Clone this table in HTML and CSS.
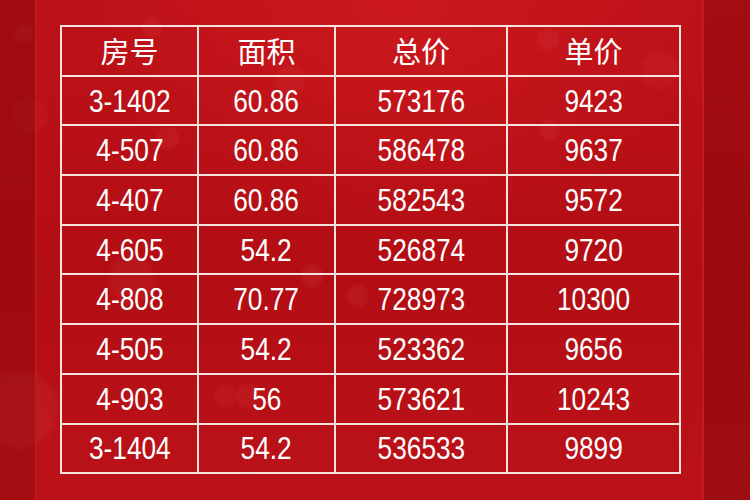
FILE: index.html
```html
<!DOCTYPE html>
<html lang="zh">
<head>
<meta charset="utf-8">
<title>房源价格表</title>
<link rel="stylesheet" href="styles.css">
</head>
<body>
<div class="page">
  <div class="side side-left"></div>
  <div class="main">
    <table class="price">
      <colgroup>
        <col class="c1"><col class="c2"><col class="c3"><col class="c4">
      </colgroup>
      <thead>
        <tr><th>房号</th><th>面积</th><th>总价</th><th>单价</th></tr>
      </thead>
      <tbody>
        <tr><td><span>3-1402</span></td><td><span>60.86</span></td><td><span>573176</span></td><td><span>9423</span></td></tr>
        <tr><td><span>4-507</span></td><td><span>60.86</span></td><td><span>586478</span></td><td><span>9637</span></td></tr>
        <tr><td><span>4-407</span></td><td><span>60.86</span></td><td><span>582543</span></td><td><span>9572</span></td></tr>
        <tr><td><span>4-605</span></td><td><span>54.2</span></td><td><span>526874</span></td><td><span>9720</span></td></tr>
        <tr><td><span>4-808</span></td><td><span>70.77</span></td><td><span>728973</span></td><td><span>10300</span></td></tr>
        <tr><td><span>4-505</span></td><td><span>54.2</span></td><td><span>523362</span></td><td><span>9656</span></td></tr>
        <tr><td><span>4-903</span></td><td><span>56</span></td><td><span>573621</span></td><td><span>10243</span></td></tr>
        <tr><td><span>3-1404</span></td><td><span>54.2</span></td><td><span>536533</span></td><td><span>9899</span></td></tr>
      </tbody>
    </table>
  </div>
  <div class="side side-right"></div>
</div>
</body>
</html>
```

FILE: styles.css
```css
html, body {
  margin: 0;
  padding: 0;
}
body {
  width: 750px;
  height: 500px;
  overflow: hidden;
  background: #b40e14;
}
.page {
  display: flex;
  width: 750px;
  height: 500px;
  background:
    radial-gradient(circle at 24px 33px, rgba(255,120,120,0.10) 0 8px, transparent 11px),
    radial-gradient(circle at 30px 115px, rgba(255,110,110,0.06) 0 16px, transparent 20px),
    radial-gradient(circle at 152px 27px, rgba(255,130,130,0.08) 0 8px, transparent 12px),
    radial-gradient(circle at 168px 138px, rgba(255,130,130,0.08) 0 9px, transparent 13px),
    radial-gradient(circle at 132px 280px, rgba(255,130,130,0.07) 0 20px, transparent 26px),
    radial-gradient(circle at 20px 410px, rgba(255,130,130,0.08) 0 34px, transparent 42px),
    radial-gradient(circle at 290px 80px, rgba(255,130,130,0.06) 0 12px, transparent 17px),
    radial-gradient(circle at 312px 276px, rgba(255,130,130,0.09) 0 9px, transparent 13px),
    radial-gradient(circle at 358px 296px, rgba(255,130,130,0.08) 0 9px, transparent 13px),
    radial-gradient(circle at 248px 396px, rgba(255,130,130,0.08) 0 10px, transparent 14px),
    radial-gradient(circle at 225px 396px, rgba(255,130,130,0.06) 0 9px, transparent 13px),
    radial-gradient(circle at 548px 40px, rgba(255,130,130,0.08) 0 9px, transparent 13px),
    radial-gradient(circle at 550px 130px, rgba(255,130,130,0.08) 0 8px, transparent 12px),
    radial-gradient(circle at 660px 70px, rgba(255,130,130,0.06) 0 16px, transparent 22px),
    radial-gradient(ellipse 320px 220px at 400px 10px, rgba(230,40,40,0.35), transparent),
    linear-gradient(180deg, #bd1118 0%, #b30e14 55%, #ba1218 100%);
}
.side {
  flex: none;
}
.side-left {
  width: 35px;
  border-right: 2px solid #c2171d;
  background: linear-gradient(180deg, rgba(100,0,0,0.32), rgba(100,0,0,0.22));
}
.side-right {
  width: 46px;
  border-left: 2px solid #c61a1f;
  background: linear-gradient(180deg, rgba(90,0,0,0.26), rgba(90,0,0,0.30));
}
.main {
  flex: 1;
  padding: 25px 0 0 23px;
}
.price {
  border-collapse: collapse;
  table-layout: fixed;
  width: 619px;
  color: #ffffff;
  font-family: "Liberation Sans", "Noto Sans CJK SC", sans-serif;
}
.c1 { width: 137px; }
.c2 { width: 137px; }
.c3 { width: 172px; }
.c4 { width: 173px; }
.price th, .price td {
  border: 2px solid #f5e4de;
  height: 49.7px;
  padding: 0;
  text-align: center;
  vertical-align: middle;
  box-sizing: border-box;
}
.price th {
  font-family: "Noto Sans CJK SC", sans-serif;
  font-weight: 400;
  font-size: 29px;
  line-height: 1;
}
.price td {
  font-size: 32px;
  line-height: 1;
}
.price td span {
  display: inline-block;
  transform: scaleX(0.82);
}
```
